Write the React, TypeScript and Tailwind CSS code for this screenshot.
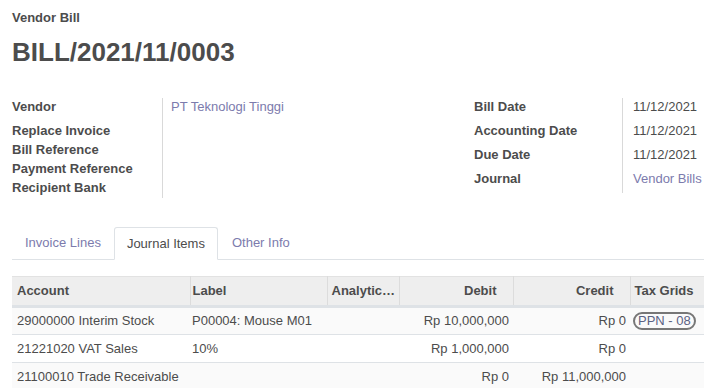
import React from "react";

const font = { fontFamily: '"Liberation Sans", Arial, sans-serif' };

type Line = {
  account: string;
  label: string;
  debit: string;
  credit: string;
  tag?: string;
};

const lines: Line[] = [
  { account: "29000000 Interim Stock", label: "P00004: Mouse M01", debit: "Rp 10,000,000", credit: "Rp 0", tag: "PPN - 08" },
  { account: "21221020 VAT Sales", label: "10%", debit: "Rp 1,000,000", credit: "Rp 0" },
  { account: "21100010 Trade Receivable", label: "", debit: "Rp 0", credit: "Rp 11,000,000" },
];

function Field({ label, value, link, tall }: { label: string; value?: string; link?: boolean; tall?: boolean }) {
  return (
    <div className={`flex items-center ${tall ? "h-[24px] mb-[2px]" : "h-[19px]"}`}>
      <div className="w-[150px] shrink-0 font-bold text-[13px] text-[#4c4c4c]">{label}</div>
      <div className={`pl-[9px] text-[13px] whitespace-nowrap ${link ? "text-[#7c7bad]" : "text-[#4c4c4c]"}`}>
        {value}
      </div>
    </div>
  );
}

export default function App() {
  return (
    <div className="w-[704px] h-[388px] overflow-hidden bg-white pl-[12px]" style={font}>
      {/* Header */}
      <div className="pt-[10px] text-[13px] font-bold text-[#4c4c4c] leading-[16px]">Vendor Bill</div>
      <h1 className="mt-[11px] text-[26px] font-bold text-[#4c4c4c] leading-[30px]">BILL/2021/11/0003</h1>

      {/* Form groups */}
      <div className="mt-[28px] flex">
        <div className="relative w-[462px] shrink-0">
          <div className="absolute left-[150px] top-[3px] h-[100px] border-l border-[#d9d9d9]" />
          <Field label="Vendor" value="PT Teknologi Tinggi" link tall />
          <Field label="Replace Invoice" />
          <Field label="Bill Reference" />
          <Field label="Payment Reference" />
          <Field label="Recipient Bank" />
        </div>
        <div className="relative flex-1">
          <div className="absolute left-[148px] top-[3px] h-[95px] border-l border-[#d9d9d9]" />
          {[
            ["Bill Date", "11/12/2021", false],
            ["Accounting Date", "11/12/2021", false],
            ["Due Date", "11/12/2021", false],
            ["Journal", "Vendor Bills", true],
          ].map(([l, v, link]) => (
            <div key={l as string} className="flex items-center h-[24px]">
              <div className="w-[148px] shrink-0 font-bold text-[13px] text-[#4c4c4c]">{l}</div>
              <div className={`pl-[11px] text-[13px] whitespace-nowrap ${link ? "text-[#7c7bad]" : "text-[#4c4c4c]"}`}>{v}</div>
            </div>
          ))}
        </div>
      </div>

      {/* Tabs */}
      <div className="mt-[30px] flex h-[33px] border-b border-[#dee2e6] text-[13px]">
        <div className="px-[13px] flex items-center text-[#7c7bad]">Invoice Lines</div>
        <div className="-mb-px px-[12px] flex items-center text-[#4c4c4c] bg-white border border-b-white border-[#dee2e6] rounded-t-[3px]">
          Journal Items
        </div>
        <div className="px-[14px] flex items-center text-[#7c7bad]">Other Info</div>
      </div>

      {/* Journal items table */}
      <table className="mt-[16px] table-fixed border-collapse text-[13px] text-[#4c4c4c] w-[780px]">
        <colgroup>
          <col className="w-[178px]" />
          <col className="w-[137px]" />
          <col className="w-[72px]" />
          <col className="w-[114px]" />
          <col className="w-[117px]" />
          <col className="w-[162px]" />
        </colgroup>
        <thead>
          <tr className="h-[30px] bg-[#eeeeee] border-t border-[#e2e2e2] border-b-[3px] border-b-[#dee2e6] font-bold">
            <th className="text-left px-[5px] font-bold">Account</th>
            <th className="text-left px-[2px] font-bold border-l border-[#dcdcdc]">Label</th>
            <th className="text-left px-[4px] font-bold border-l border-[#dcdcdc] whitespace-nowrap overflow-hidden">Analytic…</th>
            <th className="text-right px-[16px] font-bold border-l border-[#dcdcdc]">Debit</th>
            <th className="text-right px-[16px] font-bold border-l border-[#dcdcdc]">Credit</th>
            <th className="text-left px-[4px] font-bold border-l border-[#dcdcdc]">Tax Grids</th>
          </tr>
        </thead>
        <tbody>
          {lines.map((l, i) => (
            <tr key={i} className={`h-[28px] border-t border-[#dee2e6] ${i % 2 === 0 ? "bg-[#fafafa]" : "bg-white"}`}>
              <td className="px-[5px] whitespace-nowrap">{l.account}</td>
              <td className="px-[2px] whitespace-nowrap">{l.label}</td>
              <td className="px-[4px]" />
              <td className="pr-[4px] text-right whitespace-nowrap">{l.debit}</td>
              <td className="pr-[4px] text-right whitespace-nowrap">{l.credit}</td>
              <td className="px-[3px]">
                {l.tag && (
                  <span className="inline-flex items-center h-[18px] px-[3px] rounded-full border-2 border-[#777] text-[13px] leading-none text-[#5b6284]">
                    {l.tag}
                  </span>
                )}
              </td>
            </tr>
          ))}
        </tbody>
      </table>
    </div>
  );
}
